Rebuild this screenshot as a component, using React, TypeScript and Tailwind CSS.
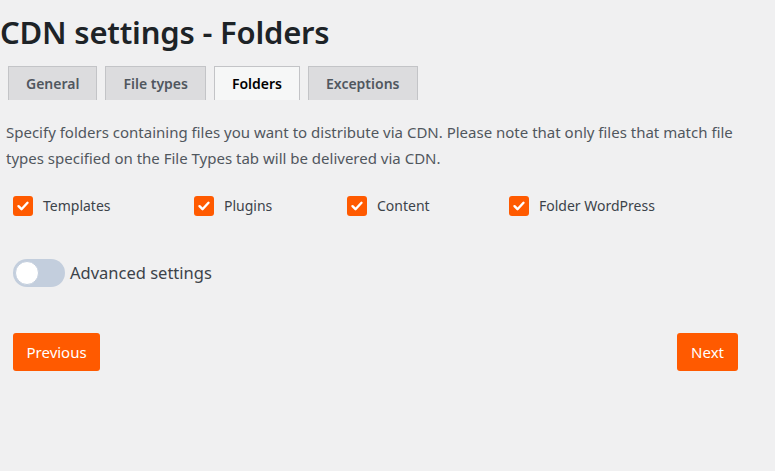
import React, { useState } from 'react';

const tabs = ['General', 'File types', 'Folders', 'Exceptions'];
const folders = [
  { label: 'Templates', w: 'w-[181px]' },
  { label: 'Plugins', w: 'w-[153px]' },
  { label: 'Content', w: 'w-[162px]' },
  { label: 'Folder WordPress', w: '' },
];

const CheckIcon = () => (
  <svg viewBox="0 0 20 20" className="h-5 w-5" fill="none" stroke="white" strokeWidth="2.4" strokeLinecap="round" strokeLinejoin="round">
    <path d="M5.5 10.2l3 3 6-6.4" />
  </svg>
);

export default function App() {
  const [checked, setChecked] = useState([true, true, true, true]);
  const [advanced, setAdvanced] = useState(false);

  return (
    <div className="min-h-[471px] w-[775px] bg-[#f0f0f1] font-['Noto_Sans',sans-serif] text-[#3c434a]">
      <h1 className="pt-[12px] text-[31px] font-semibold leading-[40px] text-[#1d2327] tracking-[-0.2px]">CDN settings - Folders</h1>

      {/* tabs */}
      <div className="mt-[14px] flex gap-2 pl-2">
        {tabs.map((t) => (
          <button
            key={t}
            className={
              t === 'Folders'
                ? 'h-[34px] border border-b-0 border-[#c3c4c7] bg-[#f6f7f7] px-[17px] text-[14px] font-semibold text-[#000]'
                : 'h-[34px] border border-b-0 border-[#c3c4c7] bg-[#dcdcde] px-[17px] text-[14px] font-semibold text-[#50575e]'
            }
          >
            {t}
          </button>
        ))}
      </div>

      <p className="mt-[19px] pl-[6px] pr-[20px] text-[15px] leading-[26px] text-[#50575e]">
        Specify folders containing files you want to distribute via CDN. Please note that only files that match file types specified on the File Types tab will be delivered via CDN.
      </p>

      {/* folder checkboxes */}
      <div className="mt-[24px] flex pl-[13px]">
        {folders.map((f, i) => (
          <label key={f.label} className={`flex cursor-pointer items-center gap-[10px] ${f.w}`}>
            <span
              onClick={() => setChecked(checked.map((c, j) => (j === i ? !c : c)))}
              className={checked[i] ? 'flex h-5 w-5 items-center justify-center rounded-[3px] bg-[#ff5a00]' : 'flex h-5 w-5 rounded-[3px] border border-[#8c8f94] bg-white'}
            >
              {checked[i] && <CheckIcon />}
            </span>
            <span className="text-[14px] text-[#3c434a]">{f.label}</span>
          </label>
        ))}
      </div>

      {/* advanced toggle */}
      <div className="mt-[43px] flex items-center gap-[5px] pl-[13px]">
        <button
          onClick={() => setAdvanced(!advanced)}
          className={
            advanced
              ? 'flex h-[28px] w-[52px] items-center justify-end rounded-full bg-[#ff5a00] p-[2px]'
              : 'flex h-[28px] w-[52px] items-center rounded-full bg-[#c3cedd] p-[2px]'
          }
        >
          <span className="h-6 w-6 rounded-full border border-[#c3cedd] bg-white" />
        </button>
        <span className="text-[16.5px] text-[#3c434a]">Advanced settings</span>
      </div>

      {/* navigation */}
      <div className="mt-[46px] flex justify-between pl-[13px] pr-[37px]">
        <button className="h-[38px] rounded-[3px] bg-[#ff5a00] px-[13.5px] text-[15px] text-white">Previous</button>
        <button className="h-[38px] rounded-[3px] bg-[#ff5a00] px-[14px] text-[15px] text-white">Next</button>
      </div>
    </div>
  );
}
